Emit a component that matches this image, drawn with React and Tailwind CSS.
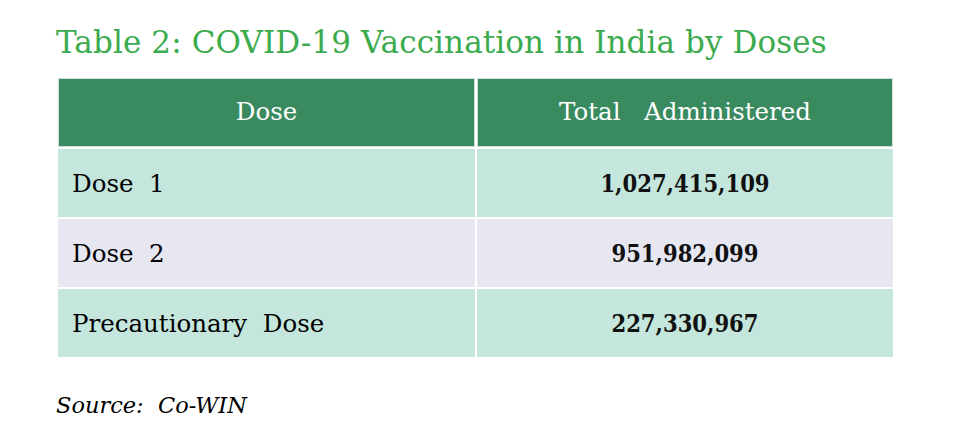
import React from "react";

const rows = [
  { dose: "Dose  1", total: "1,027,415,109", bg: "bg-[#c5e6dc]" },
  { dose: "Dose  2", total: "951,982,099", bg: "bg-[#e7e7f2]" },
  { dose: "Precautionary  Dose", total: "227,330,967", bg: "bg-[#c5e6dc]" },
];

export default function App() {
  return (
    <div className="w-[976px] h-[446px] bg-white pl-[56px] pt-[22px] whitespace-pre font-['DejaVu_Serif',serif]">
      <h1 className="text-[31px] leading-[40px] text-[#3cab4f] tracking-[0.1px]">
        Table 2: COVID-19 Vaccination in India by Doses
      </h1>
      <div className="mt-[16px] ml-[2px] w-[835px] grid grid-cols-[417px_416px] gap-[2px]">
        <div className="h-[69px] bg-[#3a8a60] border border-[#cfe3da] flex items-center justify-center text-white text-[24.5px]">
          Dose
        </div>
        <div className="h-[69px] bg-[#3a8a60] border border-[#cfe3da] flex items-center justify-center text-white text-[24.5px] [word-spacing:4px]">
          Total  Administered
        </div>
        {rows.map((r, i) => (
          <React.Fragment key={i}>
            <div className={`h-[68px] ${r.bg} flex items-center pl-[14px] pt-[3px] text-[24.5px] text-black`}>
              {r.dose}
            </div>
            <div
              className={`h-[68px] ${r.bg} flex items-center justify-center pt-[3px] text-[23.5px] font-bold text-[#111] font-['DejaVu_Serif_Condensed','DejaVu_Serif',serif]`}
            >
              {r.total}
            </div>
          </React.Fragment>
        ))}
      </div>
      <p className="mt-[32px] italic text-[22.5px] text-black">Source:  Co-WIN</p>
    </div>
  );
}
